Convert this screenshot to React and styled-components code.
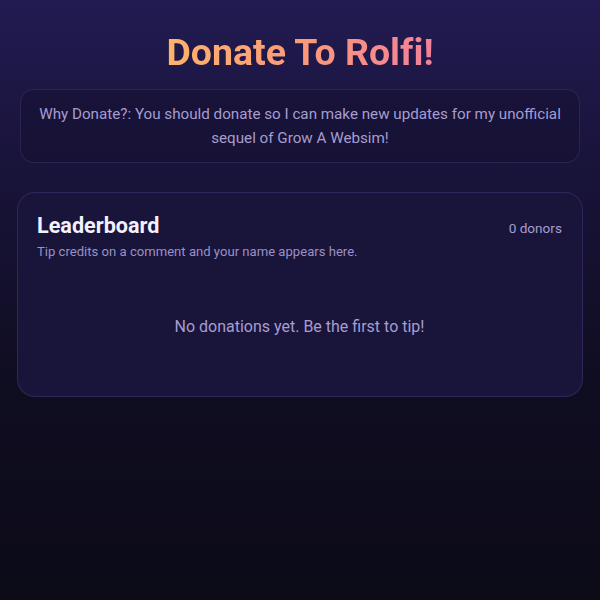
import React from "react";
import styled, { createGlobalStyle } from "styled-components";

const Global = createGlobalStyle`
	html, body {
		margin: 0;
		min-height: 100%;
	}
	body {
		min-height: 600px;
		font-family: Roboto, "Liberation Sans", sans-serif;
		background: linear-gradient(180deg, #221b52 0%, #181338 30%, #0f0d20 65%, #0c0b18 100%);
		color: #a89fd2;
	}
`;

export default () => {
	const donors = [];
	return (
		<Page>
			<Global />
			<Title>Donate To Rolfi!</Title>
			<Info>
				Why Donate?: You should donate so I can make new updates for my unofficial
				sequel of Grow A Websim!
			</Info>
			<Card>
				<CardHead>
					<div>
						<CardTitle>Leaderboard</CardTitle>
						<CardSub>Tip credits on a comment and your name appears here.</CardSub>
					</div>
					<Count>{donors.length} donors</Count>
				</CardHead>
				<Empty>No donations yet. Be the first to tip!</Empty>
			</Card>
		</Page>
	);
};

const Page = styled.main`
	padding: 28px 17px 0;
	display: flex;
	flex-direction: column;
`;

const Title = styled.h1`
	margin: 0 auto;
	font-size: 37.5px;
	font-weight: 700;
	line-height: 48px;
	font-variant-ligatures: none;
	background: linear-gradient(90deg, #fdb36b 0%, #fb9a78 50%, #f2819a 100%);
	-webkit-background-clip: text;
	background-clip: text;
	color: transparent;
`;

const Info = styled.p`
	margin: 13px 3px 0;
	padding: 12px 16px;
	border: 1px solid rgba(130, 115, 210, 0.18);
	border-radius: 14px;
	background: rgba(22, 17, 50, 0.6);
	text-align: center;
	font-size: 15.2px;
	line-height: 24px;
	color: #a69dd0;
`;

const Card = styled.section`
	margin-top: 29px;
	padding: 20px 20px 0 19px;
	height: 205px;
	box-sizing: border-box;
	border: 1px solid rgba(130, 115, 210, 0.2);
	border-radius: 18px;
	background: #19143a;
`;

const CardHead = styled.div`
	display: flex;
	justify-content: space-between;
	align-items: flex-start;
`;

const CardTitle = styled.h2`
	margin: 0;
	font-size: 21.6px;
	font-weight: 700;
	line-height: 26px;
	color: #f3f1ff;
`;

const CardSub = styled.p`
	margin: 4px 0 0;
	font-size: 13.1px;
	line-height: 18px;
	color: #9a91c6;
`;

const Count = styled.span`
	margin-top: 7px;
	font-size: 13.6px;
	color: #a69dd0;
`;

const Empty = styled.p`
	margin: 56px 0 0;
	text-align: center;
	font-size: 16px;
	color: #a69dd0;
`;
